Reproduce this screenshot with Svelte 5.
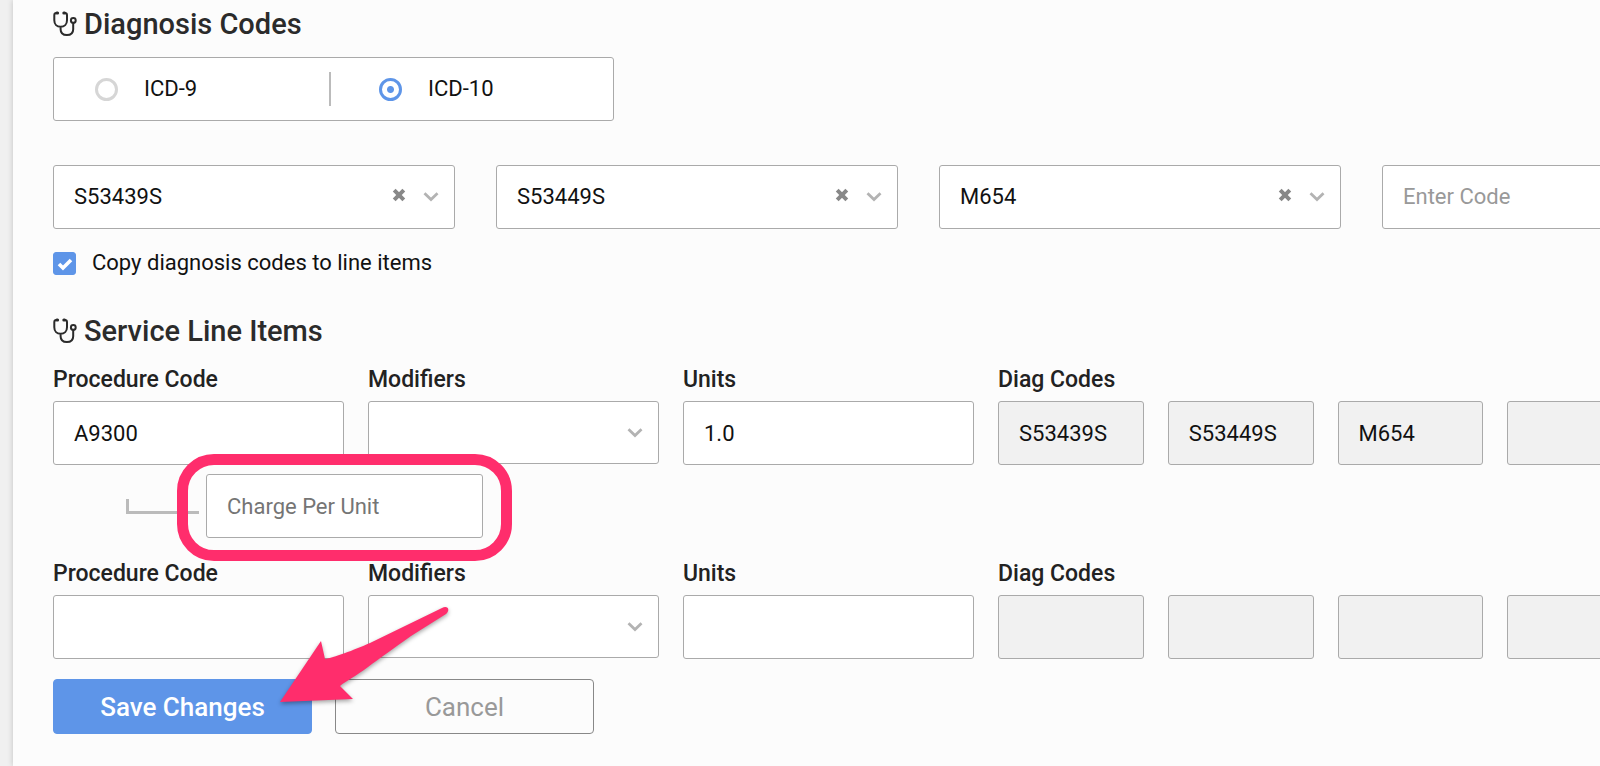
<script lang="ts">
	type LineItem = { procedure: string; modifier: string; units: string; charge?: string };

	let icdVersion = $state('10');
	let copyCodes = $state(true);
	let codes = $state(['S53439S', 'S53449S', 'M654', '']);
	let items: LineItem[] = $state([
		{ procedure: 'A9300', modifier: '', units: '1.0', charge: '' },
		{ procedure: '', modifier: '', units: '' }
	]);

	const options = ['S53439S', 'S53449S', 'M654'];

	function diagCodes(index: number) {
		return index === 0 && copyCodes ? codes : ['', '', '', ''];
	}
</script>

{#snippet stethoscope()}
	<svg class="stethoscope" viewBox="0 0 24 26" aria-hidden="true">
		<path
			d="M4.4 2H3.4Q1.3 2 1.3 4.2V9.2C1.3 13.2 3.9 15.8 7.6 15.8S14 13.2 14 9.2V4.2Q14 2 11.9 2H10.9M7.6 15.8V18.2C7.6 22 10 24 13.9 24S20.2 22 20.2 18.2V12"
		/>
		<circle cx="20.3" cy="9.4" r="2.4" />
		<path class="tips" d="M3.8 2.1H4.6M10.8 2.1H11.6" />
	</svg>
{/snippet}

{#snippet chevron()}
	<svg class="chevron" viewBox="0 0 16 10" aria-hidden="true">
		<path d="M1.5 1.3L8 7.5L14.5 1.3" />
	</svg>
{/snippet}

<main>
	<form onsubmit={(e) => e.preventDefault()}>
		<h2>{@render stethoscope()}Diagnosis Codes</h2>

		<div class="versions" role="radiogroup" aria-label="Code version">
			<label><input type="radio" name="icd" value="9" bind:group={icdVersion} />ICD-9</label>
			<label><input type="radio" name="icd" value="10" bind:group={icdVersion} />ICD-10</label>
		</div>

		<div class="codes">
			{#each codes as code, i}
				<div class="select">
					<select
						class="code"
						class:empty={!code}
						aria-label={`Diagnosis code ${i + 1}`}
						bind:value={codes[i]}
					>
						<option value="">Enter Code</option>
						{#each options as option}
							<option value={option}>{option}</option>
						{/each}
					</select>
					{#if code}
						<button
							class="clear"
							type="button"
							aria-label={`Clear ${code}`}
							onclick={() => (codes[i] = '')}
						>
							<svg viewBox="0 0 14 14" aria-hidden="true">
								<path d="M2.2 2.2L11.8 11.8M11.8 2.2L2.2 11.8" />
							</svg>
						</button>
					{/if}
					{@render chevron()}
				</div>
			{/each}
		</div>

		<label class="copy">
			<input type="checkbox" bind:checked={copyCodes} />
			<svg viewBox="0 0 23 23" aria-hidden="true"><path d="M6 12L10 16L18 8" /></svg>
			Copy diagnosis codes to line items
		</label>

		<h2>{@render stethoscope()}Service Line Items</h2>

		{#each items as item, i}
			<div class="line">
				<div class="field">
					<label for={`procedure-${i}`}>Procedure Code</label>
					<input id={`procedure-${i}`} type="text" bind:value={item.procedure} />
				</div>
				<div class="field">
					<label for={`modifiers-${i}`}>Modifiers</label>
					<div class="select">
						<select id={`modifiers-${i}`} class="modifier" bind:value={item.modifier}>
							<option value=""></option>
						</select>
						{@render chevron()}
					</div>
				</div>
				<div class="field">
					<label for={`units-${i}`}>Units</label>
					<input id={`units-${i}`} type="text" bind:value={item.units} />
				</div>
				<div class="field">
					<label for={`diag-${i}-0`}>Diag Codes</label>
					<div class="diag">
						{#each diagCodes(i) as code, n}
							<input
								id={`diag-${i}-${n}`}
								type="text"
								value={code}
								readonly
								aria-label={`Diag code ${n + 1}`}
							/>
						{/each}
					</div>
				</div>
			</div>
			{#if item.charge !== undefined}
				<div class="charge">
					<span class="branch"></span>
					<div class="highlight">
						<input
							type="text"
							placeholder="Charge Per Unit"
							aria-label="Charge Per Unit"
							bind:value={item.charge}
						/>
					</div>
				</div>
			{/if}
		{/each}

		<div class="actions">
			<button class="save" type="submit">Save Changes</button>
			<button class="cancel" type="button">Cancel</button>
			<svg class="arrow" viewBox="0 0 176 100" aria-hidden="true">
				<path
					d="M4 66L45 5L49 23C57 22 78 14 94 7L166 -28C171 -31 175 -27 170 -22L135 0C118 12 103 23 92 31C80 40 70 45 64 50L77 63Z"
				/>
			</svg>
		</div>
	</form>
</main>

<style>
	:global(body) {
		background: #f0f0f0;
	}
	main {
		min-height: 100vh;
		box-sizing: border-box;
		margin-left: 13px;
		padding: 8px 40px 32px;
		overflow: hidden;
		background: #fcfcfc;
		box-shadow: 0 0 6px rgba(0, 0, 0, 0.2);
		font-family: Roboto, 'Liberation Sans', sans-serif;
		font-size: 22px;
		line-height: 24px;
		color: #111;
	}
	form {
		min-width: 1731px;
	}
	input,
	select,
	button {
		box-sizing: border-box;
		margin: 0;
		font: inherit;
		color: inherit;
	}
	h2 {
		display: flex;
		align-items: center;
		gap: 7px;
		margin: 0;
		font-size: 29px;
		line-height: 32px;
		font-weight: 500;
		color: #2b2b2b;
	}
	.stethoscope {
		width: 24px;
		height: 26px;
		fill: none;
		stroke: #2b2b2b;
		stroke-width: 2;
	}
	.stethoscope .tips {
		stroke-width: 3;
		stroke-linecap: round;
	}

	.versions {
		display: flex;
		align-items: center;
		width: 561px;
		height: 64px;
		box-sizing: border-box;
		margin: 17px 0 44px;
		border: 1px solid #aaa;
		border-radius: 3px;
		background: #fff;
	}
	.versions label {
		display: flex;
		flex: 1;
		align-items: center;
		gap: 26px;
		height: 34px;
		padding-left: 41px;
	}
	.versions label + label {
		padding-left: 48px;
		border-left: 2px solid #bbb;
	}
	.versions input {
		appearance: none;
		width: 23px;
		height: 23px;
		border: 3px solid #d6d6d6;
		border-radius: 50%;
	}
	.versions input:checked {
		border-color: #5e95e8;
		background: radial-gradient(circle, #5e95e8 3px, transparent 4px);
	}

	.codes {
		display: grid;
		grid-template-columns: repeat(4, 1fr);
		gap: 41px;
	}
	.select {
		position: relative;
	}
	select,
	input[type='text'] {
		display: block;
		width: 100%;
		height: 64px;
		padding: 0 20px;
		border: 1px solid #aaa;
		border-radius: 3px;
		background: #fff;
		appearance: none;
	}
	.code.empty {
		color: #999;
	}
	.modifier {
		height: 63px;
	}
	.chevron {
		position: absolute;
		top: 27px;
		right: 16px;
		width: 16px;
		height: 10px;
		fill: none;
		stroke: #b3b3b3;
		stroke-width: 2.8;
		pointer-events: none;
	}
	.clear {
		position: absolute;
		top: 23px;
		right: 49px;
		display: flex;
		padding: 0;
		border: 0;
		background: none;
	}
	.clear svg {
		width: 14px;
		height: 14px;
		stroke: #888;
		stroke-width: 4;
	}

	.copy {
		position: relative;
		display: flex;
		align-items: center;
		gap: 16px;
		margin: 22px 0 40px;
	}
	.copy input {
		appearance: none;
		width: 23px;
		height: 23px;
		border: 1px solid #5e95e8;
		border-radius: 3px;
	}
	.copy input:checked {
		background: #5e95e8;
	}
	.copy svg {
		position: absolute;
		left: 0;
		width: 23px;
		height: 23px;
		fill: none;
		stroke: #fff;
		stroke-width: 3.6;
		pointer-events: none;
	}

	.line {
		display: grid;
		grid-template-columns: 291fr 291fr 291fr 655fr 107fr;
		gap: 24px;
		margin-top: 21px;
	}
	.field > label {
		display: block;
		margin-bottom: 9px;
		font-size: 23px;
		font-weight: 500;
		color: #222;
	}
	.diag {
		display: grid;
		grid-template-columns: repeat(4, 1fr);
		gap: 24px;
	}
	.diag input[type='text'] {
		background: #f1f1f1;
	}
	.charge {
		display: flex;
		align-items: center;
		gap: 7px;
		margin: 9px 0 24px 73px;
	}
	.charge + .line {
		margin-top: 0;
	}
	.branch {
		width: 73px;
		height: 15px;
		box-sizing: border-box;
		border: solid #bbb;
		border-width: 0 0 3px 3px;
	}
	.highlight {
		position: relative;
		width: 277px;
	}
	.highlight::after {
		content: '';
		position: absolute;
		inset: -20px -29px -23px;
		border: 11px solid #ff2d6c;
		border-radius: 37px;
		pointer-events: none;
	}
	.highlight input::placeholder {
		color: #757575;
		opacity: 1;
	}

	.actions {
		position: relative;
		display: flex;
		gap: 23px;
		margin-top: 20px;
	}
	.actions button {
		width: 259px;
		height: 55px;
		border: 1px solid #888;
		border-radius: 4px;
		background: #fcfcfc;
		font-size: 26px;
		color: #999;
	}
	.actions .save {
		border-color: #5e95e8;
		background: #5e95e8;
		font-weight: 500;
		color: #fff;
	}
	.arrow {
		position: absolute;
		top: -43px;
		left: 223px;
		width: 176px;
		height: 100px;
		overflow: visible;
		fill: #ff2d6c;
		filter: drop-shadow(0 2px 2px rgba(0, 0, 0, 0.35));
		pointer-events: none;
	}
</style>
